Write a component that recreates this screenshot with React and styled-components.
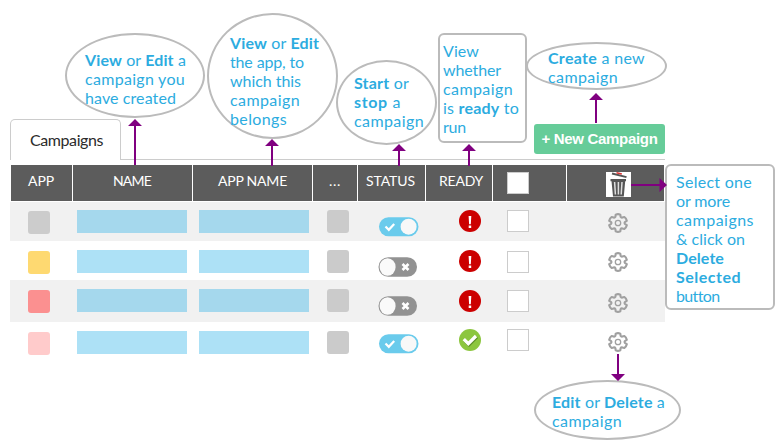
import React, { useLayoutEffect, useRef, useState } from 'react';
import styled, { createGlobalStyle } from 'styled-components';

const GlobalStyle = createGlobalStyle`
  * { box-sizing: border-box; }
  body { margin: 0; background: #fff; overflow: hidden; }
`;

const Page = styled.main`
  position: relative;
  width: 775px;
  height: 440px;
  padding: 119px 110px 0 10px;
  overflow: hidden;
  background: #fff;
  font-family: Lato, 'Liberation Sans', sans-serif;
  font-size: 16px;
`;

const Toolbar = styled.header`
  display: flex;
  height: 41px;
  margin-bottom: 5px;
`;

const Tab = styled.div`
  width: 111px;
  padding: 10px 0 0 19px;
  border: 1px solid #ccc;
  border-bottom: 0;
  border-radius: 5px 5px 0 0;
  color: #2b2b2b;
  line-height: 19px;
`;

const TabRule = styled.div`
  flex: 1;
  display: flex;
  justify-content: flex-end;
  padding-top: 5px;
  border-bottom: 1px solid #ccc;
`;

const NewButton = styled.button`
  width: 131px;
  height: 30px;
  padding: 0 0 2px;
  border: 0;
  border-radius: 3px;
  background: #66cc99;
  color: #fff;
  font: bold 15px 'Liberation Sans', Arial, sans-serif;
  white-space: nowrap;
`;

const columns = '62px 120px 120px 45px 68px 67px 74px 99px';

const HeaderRow = styled.div`
  display: grid;
  grid-template-columns: ${columns};
  height: 36px;
  margin-bottom: 1px;
`;

const HeaderCell = styled.div`
  display: flex;
  justify-content: flex-start;
  padding: ${(p) => p.$top ?? 6}px 0 0 ${(p) => p.$left}px;
  background: #5c5c5c;
  border-left: 1px solid #fff;
  color: #fff;
  font-size: 14px;
  line-height: 19px;
  &:last-child { border-right: 1px solid #fff; }
`;

const Row = styled.div`
  display: grid;
  grid-template-columns: ${columns};
  height: ${(p) => p.$height}px;
  background: ${(p) => (p.$shaded ? '#f1f1f1' : '#fff')};
`;

const Cell = styled.div`
  display: flex;
  align-items: flex-start;
  padding: ${(p) => p.$top}px 0 0 ${(p) => p.$left}px;
`;

const Swatch = styled.div`
  width: 22px;
  height: 23px;
  border-radius: 3px;
  background: ${(p) => p.$color};
`;

const Bar = styled.div`
  width: 110px;
  height: 23px;
  background: ${(p) => (p.$shaded ? '#a5d8ed' : '#ade1f6')};
`;

const Checkbox = styled.div`
  width: 22px;
  height: 22px;
  border: 1px solid #ccc;
  background: #fff;
`;

const Icon = styled.svg`
  display: block;
  flex: none;
`;

const Callout = styled.aside`
  position: absolute;
  left: ${(p) => p.$x}px;
  top: ${(p) => p.$y}px;
  width: ${(p) => p.$w}px;
  height: ${(p) => p.$h}px;
  padding: ${(p) => p.$pad};
  border: 2px solid #bbb;
  border-radius: ${(p) => (p.$round ? '50%' : '6px')};
  color: #2cace0;
  line-height: 19px;
  b { font-weight: 700; }
`;

const Line = styled.div`
  height: 19px;
  white-space: nowrap;
`;

const Arrow = styled.svg`
  position: absolute;
  left: ${(p) => p.$x}px;
  top: ${(p) => p.$y}px;
  fill: purple;
`;

const Measured = styled.span`
  display: inline-block;
  white-space: nowrap;
`;

/* Spreads or tightens its letters so the text fills the given width. */
function FitText({ width, children }) {
  const ref = useRef(null);
  const [spacing, setSpacing] = useState(0);
  useLayoutEffect(() => {
    const el = ref.current;
    const gaps = el.textContent.length;
    const natural = el.getBoundingClientRect().width;
    setSpacing((width - natural) / gaps);
  }, [width]);
  return (
    <Measured ref={ref} style={{ letterSpacing: `${spacing}px` }}>
      {children}
    </Measured>
  );
}

function Toggle({ on }) {
  return on ? (
    <Icon width="41" height="20" viewBox="0 0 41 20">
      <rect x="1" y="0.2" width="39.5" height="19" rx="9.5" fill="#6acbec" />
      <circle cx="30.6" cy="9.7" r="8" fill="#f8f8f8" />
      <path d="M7.5 9.5 L10.8 12.8 L16.2 7" fill="none" stroke="#fff" strokeWidth="2.2" />
    </Icon>
  ) : (
    <Icon width="41" height="20" viewBox="0 0 41 20">
      <rect x="0.5" y="0.2" width="38.5" height="19.6" rx="9.8" fill="#929292" />
      <ellipse cx="9.6" cy="10" rx="8" ry="8.7" fill="#fafafa" />
      <path d="M24.5 7 L30.5 13 M30.5 7 L24.5 13" stroke="#fff" strokeWidth="2.6" />
    </Icon>
  );
}

function ReadyIcon({ ok }) {
  return ok ? (
    <Icon width="22" height="22" viewBox="0 0 22 22">
      <circle cx="11" cy="11" r="11" fill="#8cc63f" />
      <path d="M5.5 11.5 L10 16 L18 8" fill="none" stroke="#5e8d29" strokeWidth="3" />
      <path d="M4.8 10.2 L9.3 14.7 L17 7" fill="none" stroke="#fff" strokeWidth="3.3" />
    </Icon>
  ) : (
    <Icon width="22" height="22" viewBox="0 0 22 22">
      <circle cx="11" cy="11" r="11" fill="#cc0000" />
      <path d="M9.6 6 H12.3 L11.8 14.2 H10.1 Z M9.7 15.5 H12.2 V18 H9.7 Z" fill="#fff" />
    </Icon>
  );
}

function Gear() {
  return (
    <Icon width="20" height="20" viewBox="0 0 20 20" fill="none" stroke="#a0a0a0">
      <path
        strokeWidth="2.1"
        strokeLinejoin="round"
        d="M7.7 1.6 Q10 .6 12.3 1.6 L12.6 3.8 Q13.1 4.8 14.2 4.6 L16.4 4 Q18.2 5.3 18.8 7.8 L17 9 Q16.2 10 17 11 L18.8 12.2 Q18.2 14.7 16.4 16 L14.2 15.4 Q13.1 15.2 12.6 16.2 L12.3 18.4 Q10 19.4 7.7 18.4 L7.4 16.2 Q6.9 15.2 5.8 15.4 L3.6 16 Q1.8 14.7 1.2 12.2 L3 11 Q3.8 10 3 9 L1.2 7.8 Q1.8 5.3 3.6 4 L5.8 4.6 Q6.9 4.8 7.4 3.8 Z"
      />
      <circle cx="10" cy="10" r="2.7" strokeWidth="1.3" />
    </Icon>
  );
}

function Trash() {
  return (
    <Icon width="25" height="25" viewBox="0 0 25 25">
      <rect width="25" height="25" fill="#fff" />
      <path d="M6 1.5 L20.5 5.2" stroke="#555" strokeWidth="1.9" />
      <path d="M10.5 .8 L15.8 2.1" stroke="#d33" strokeWidth="1.5" />
      <path d="M4.5 7 H20 V9.2 H4.5 Z M5.5 9 H19.2 L17.8 24.5 H7 Z" fill="#555" />
      <path d="M8.6 10 L9.4 22.5 M12.4 10 V22.5 M16 10 L15.2 22.5" stroke="#ddd" strokeWidth="1.5" />
    </Icon>
  );
}

function UpArrow({ x, y, length }) {
  return (
    <Arrow $x={x - 7} $y={y} width="14" height={length}>
      <path d={`M7 0 L14 7 H8 V${length} H6 V7 H0 Z`} />
    </Arrow>
  );
}

const headers = [
  { text: 'APP', left: 17, width: 26 },
  { text: 'NAME', left: 40, width: 38 },
  { text: 'APP NAME', left: 25, width: 69 },
  { text: '...', left: 16, width: 12 },
  { text: 'STATUS', left: 8, width: 49 },
  { text: 'READY', left: 13, width: 44 },
];

const rows = [
  { height: 39, color: '#cccccc', swatch: 9, bar: 8, toggle: 15, ready: 8, box: 8, gear: 11, on: true },
  { height: 39, color: '#fed971', swatch: 10, bar: 9, toggle: 16, ready: 9, box: 10, gear: 11 },
  { height: 42, color: '#fb9090', swatch: 10, bar: 9, toggle: 16, ready: 10, box: 10, gear: 13 },
  { height: 39, color: '#ffcbcb', swatch: 10, bar: 9, toggle: 12, ready: 7, box: 7, gear: 10, on: true, ok: true },
];

const callouts = [
  {
    x: 65, y: 33, w: 140, h: 85, pad: '15px 0 0 18px', round: true,
    lines: [[101, <><b>View</b> or <b>Edit</b> a</>], [100, 'campaign you'], [91, 'have created']],
  },
  {
    x: 207, y: 13, w: 131, h: 126, pad: '18px 0 0 21px', round: true,
    lines: [[89, <><b>View</b> or <b>Edit</b></>], [74, 'the app, to'], [71, 'which this'], [70, 'campaign'], [57, 'belongs']],
  },
  {
    x: 336, y: 60, w: 101, h: 85, pad: '11px 0 0 16px', round: true,
    lines: [[55, <><b>Start</b> or</>], [47, <><b>stop</b> a</>], [70, 'campaign']],
  },
  {
    x: 438, y: 33, w: 89, h: 110, pad: '6px 0 0 3px',
    lines: [[36, 'View'], [58, 'whether'], [70, 'campaign'], [76, <>is <b>ready</b> to</>], [23, 'run']],
  },
  {
    x: 526, y: 42, w: 141, h: 48, pad: '4px 0 0 20px', round: true,
    lines: [[97, <><b>Create</b> a new</>], [70, 'campaign']],
  },
  {
    x: 665, y: 164, w: 110, h: 146, pad: '6px 0 0 9px',
    lines: [[76, 'Select one'], [54, 'or more'], [78, 'campaigns'], [69, '& click on'], [48, <b>Delete</b>], [65, <b>Selected</b>], [43, 'button']],
  },
  {
    x: 534, y: 380, w: 147, h: 60, pad: '10px 0 0 16px', round: true,
    lines: [[113, <><b>Edit</b> or <b>Delete</b> a</>], [70, 'campaign']],
  },
];

export default function App() {
  return (
    <Page>
      <GlobalStyle />
      <Toolbar>
        <Tab><FitText width={73}>Campaigns</FitText></Tab>
        <TabRule>
          <NewButton><FitText width={116}>+ New Campaign</FitText></NewButton>
        </TabRule>
      </Toolbar>
      <HeaderRow>
        {headers.map((h) => (
          <HeaderCell key={h.text} $left={h.left}>
            <FitText width={h.width}>{h.text}</FitText>
          </HeaderCell>
        ))}
        <HeaderCell $left={14} $top={7}><Checkbox /></HeaderCell>
        <HeaderCell $left={39} $top={7}><Trash /></HeaderCell>
      </HeaderRow>
      {rows.map((r, i) => (
        <Row key={r.color} $height={r.height} $shaded={i % 2 === 0}>
          <Cell $left={18} $top={r.swatch}><Swatch $color={r.color} /></Cell>
          <Cell $left={5} $top={r.bar}><Bar $shaded={i % 2 === 0} /></Cell>
          <Cell $left={7} $top={r.bar}><Bar $shaded={i % 2 === 0} /></Cell>
          <Cell $left={15} $top={r.bar}><Swatch $color="#cbcbcb" /></Cell>
          <Cell $left={21} $top={r.toggle}><Toggle on={r.on} /></Cell>
          <Cell $left={34} $top={r.ready}><ReadyIcon ok={r.ok} /></Cell>
          <Cell $left={15} $top={r.box}><Checkbox /></Cell>
          <Cell $left={42} $top={r.gear}><Gear /></Cell>
        </Row>
      ))}
      {callouts.map((c) => (
        <Callout key={c.x} $x={c.x} $y={c.y} $w={c.w} $h={c.h} $pad={c.pad} $round={c.round}>
          {c.lines.map(([width, text], i) => (
            <Line key={i}><FitText width={width}>{text}</FitText></Line>
          ))}
        </Callout>
      ))}
      <UpArrow x={135} y={119} length={46} />
      <UpArrow x={272} y={139} length={27} />
      <UpArrow x={399} y={144} length={22} />
      <UpArrow x={469} y={144} length={22} />
      <UpArrow x={596} y={93} length={30} />
      <Arrow $x={631} $y={178} width="36" height="14">
        <path d="M0 6 H28.5 V0 L36 7 L28.5 14 V8 H0 Z" />
      </Arrow>
      <Arrow $x={611} $y={354} width="14" height="27">
        <path d="M6 0 H8 V20 H14 L7 27 L0 20 H6 Z" />
      </Arrow>
    </Page>
  );
}
